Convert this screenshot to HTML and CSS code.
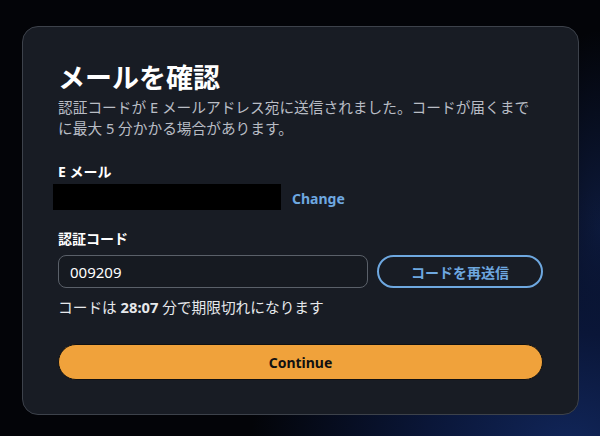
FILE: index.html
```html
<!DOCTYPE html>
<html lang="ja">
<head>
  <meta charset="UTF-8">
  <title>メールを確認</title>
  <link rel="stylesheet" href="styles.css">
</head>
<body>
  <div class="carte">
    <h1>メールを確認</h1>
    <p class="description">認証コードが E メールアドレス宛に送信されました。コードが届くまでに最大 5 分かかる場合があります。</p>

    <div class="champ">
      <div class="libelle">E メール</div>
      <div class="email-row">
        <div class="masque"></div>
        <a class="lien" href="#">Change</a>
      </div>
    </div>

    <div class="champ">
      <div class="libelle">認証コード</div>
      <div class="code-row">
        <input class="saisie" type="text" value="009209">
        <button class="renvoyer">コードを再送信</button>
      </div>
      <p class="expiration">コードは <b>28:07</b> 分で期限切れになります</p>
    </div>

    <button class="continuer">Continue</button>
  </div>
</body>
</html>
```

FILE: styles.css
```css
body {
  margin: 0;
  padding: 26px 21px 0 22px;
  height: 436px;
  box-sizing: border-box;
  background:
    radial-gradient(ellipse 320px 260px at 570px 450px, #11265a 0%, #0a1638 45%, rgba(0,0,0,0) 100%),
    radial-gradient(ellipse 80px 200px at 600px 230px, #0d1a3c 0%, rgba(0,0,0,0) 100%),
    #030408;
  font-family: "Noto Sans", "Noto Sans CJK JP", sans-serif;
  color: #fff;
  overflow: hidden;
}

.carte {
  background-color: #181c24;
  border: 1px solid #3d424b;
  border-radius: 16px;
  padding: 33px 35px 33px 35px;
  height: 389px;
  box-sizing: border-box;
}

h1 {
  margin: 0;
  font-size: 27px;
  font-weight: bold;
  line-height: 36px;
}

.description {
  margin: 1px 0 0 0;
  font-size: 14.7px;
  line-height: 21px;
  color: #b9bdc5;
}

.champ {
  margin-top: 23px;
}

.libelle {
  font-size: 14px;
  font-weight: bold;
  line-height: 20px;
}

.email-row {
  display: flex;
  align-items: center;
  gap: 11px;
  margin-top: 2px;
  margin-left: -5px;
}

.masque {
  width: 228px;
  height: 26px;
  background-color: #000;
}

.lien {
  color: #6ea8e0;
  font-size: 14px;
  font-weight: bold;
  text-decoration: none;
  margin-top: 2px;
}

.champ + .champ {
  margin-top: 19px;
}

.code-row {
  display: flex;
  gap: 9px;
  margin-top: 6px;
}

.saisie {
  width: 310px;
  height: 33px;
  box-sizing: border-box;
  background-color: #161a21;
  border: 1px solid #5a6069;
  border-radius: 8px;
  padding: 0 11px;
  color: #fff;
  font-family: "Noto Sans", sans-serif;
  font-size: 15px;
  outline: none;
}

.renvoyer {
  flex: 1;
  height: 33px;
  background: transparent;
  border: 2px solid #6ea8e0;
  border-radius: 17px;
  color: #6ea8e0;
  font-family: "Noto Sans CJK JP", sans-serif;
  font-size: 14px;
  font-weight: bold;
}

.expiration {
  margin: 9px 0 0 0;
  font-size: 14.7px;
  line-height: 20px;
  color: #e6e8eb;
}

.continuer {
  display: block;
  width: 100%;
  height: 36px;
  margin-top: 27px;
  background-color: #f0a23b;
  border: 1px solid #111;
  border-radius: 18px;
  color: #111;
  font-family: "Noto Sans", sans-serif;
  font-size: 14px;
  font-weight: bold;
}
```
